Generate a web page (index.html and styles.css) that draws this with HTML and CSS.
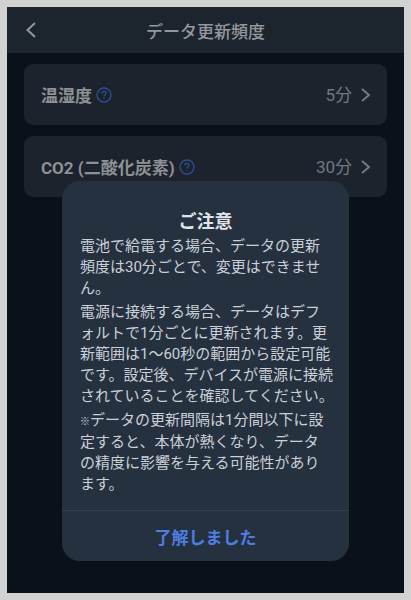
FILE: index.html
```html
<!DOCTYPE html>
<html lang="ja">
  <head>
    <meta charset="UTF-8" />
    <meta name="viewport" content="width=device-width, initial-scale=1.0" />
    <title>データ更新頻度</title>
    <link rel="stylesheet" href="styles.css">
  </head>

  <body>
    <div class="screen">
      <header class="header">
        <button class="back" aria-label="戻る">
          <svg width="10" height="16" viewBox="0 0 10 16"><path d="M9 1L1.5 8L9 15" /></svg>
        </button>
        <h1>データ更新頻度</h1>
      </header>

      <main class="list">
        <div class="item">
          <span class="name">温湿度</span>
          <button class="help" aria-label="温湿度のヘルプ">
            <svg width="16" height="16" viewBox="0 0 16 16">
              <circle cx="8" cy="8" r="7" />
              <path d="M6 6.5C6 3.7 10 3.7 10 6.3C10 7.8 8 7.8 8 9.5M8 11V12" />
            </svg>
          </button>
          <a class="value" href="#">5分
            <svg width="9" height="14" viewBox="0 0 9 14"><path d="M1 1L8 7L1 13" /></svg>
          </a>
        </div>
        <div class="item">
          <span class="name">CO2 (二酸化炭素)</span>
          <button class="help" aria-label="CO2のヘルプ">
            <svg width="16" height="16" viewBox="0 0 16 16">
              <circle cx="8" cy="8" r="7" />
              <path d="M6 6.5C6 3.7 10 3.7 10 6.3C10 7.8 8 7.8 8 9.5M8 11V12" />
            </svg>
          </button>
          <a class="value" href="#">30分
            <svg width="9" height="14" viewBox="0 0 9 14"><path d="M1 1L8 7L1 13" /></svg>
          </a>
        </div>
      </main>

      <div class="overlay">
        <div class="dialog" role="dialog" aria-labelledby="dialog-title">
          <div class="dialog-body">
            <h2 id="dialog-title">ご注意</h2>
            <p>電池で給電する場合、データの更新<br>頻度は30分ごとで、変更はできませ<br>ん。</p>
            <p>電源に接続する場合、データはデフ<br>ォルトで1分ごとに更新されます。更<br>新範囲は1〜60秒の範囲から設定可能<br>です。設定後、デバイスが電源に接続<br>されていることを確認してください。</p>
            <p><span class="mark">※</span>データの更新間隔は1分間以下に設<br>定すると、本体が熱くなり、データ<br>の精度に影響を与える可能性があり<br>ます。</p>
          </div>
          <button class="ok">了解しました</button>
        </div>
      </div>
    </div>
  </body>
</html>
```

FILE: styles.css
```css
* {
  box-sizing: border-box;
}

body {
  margin: 0;
  padding: 7px;
  min-height: 100vh;
  display: flex;
  background: #d2d2d2;
  font-family: Roboto, "Noto Sans CJK JP", sans-serif;
}

h1,
h2,
p {
  margin: 0;
}

button {
  padding: 0;
  border: 0;
  background: none;
  font-family: inherit;
  cursor: pointer;
}

svg {
  display: block;
  fill: none;
  stroke: currentColor;
}

.screen {
  position: relative;
  flex: 1;
  background: #0b1119;
}

.header {
  display: grid;
  grid-template-columns: 50px 1fr 50px;
  align-items: center;
  height: 46px;
  background: #1c242e;
  color: #94979b;
}

.header h1 {
  padding-top: 3px;
  font-size: 17px;
  font-weight: 500;
  line-height: 24px;
  text-align: center;
}

.back {
  display: flex;
  height: 46px;
  padding-left: 19px;
  align-items: center;
  color: #94979b;
}

.back svg,
.value svg {
  stroke-width: 2;
}

.list {
  display: grid;
  gap: 11px;
  padding: 11px 17px;
}

.item {
  display: flex;
  align-items: center;
  height: 61px;
  padding: 0 17px;
  border-radius: 9px;
  background: #1c232d;
}

.name {
  padding-top: 3px;
  color: #8e9195;
  font-size: 17px;
  font-weight: 700;
  line-height: 24px;
}

.help {
  margin-left: 4px;
  color: #2b4f98;
}

.help svg {
  stroke-width: 1.3;
}

.value {
  display: flex;
  align-items: center;
  gap: 9px;
  margin-left: auto;
  padding-top: 1px;
  color: #74787f;
  font-size: 17px;
  line-height: 24px;
  text-decoration: none;
}

/* окно поверх списка */
.overlay {
  position: absolute;
  inset: 0;
  display: flex;
  align-items: flex-end;
  padding: 0 55px 32px;
}

.dialog {
  flex: 1;
  border-radius: 18px;
  background: #263140;
  overflow: hidden;
}

.dialog-body {
  display: grid;
  gap: 3px;
  padding: 29px 0 15px 18px;
  color: #cbd0d7;
  font-size: 15px;
  line-height: 21px;
  white-space: nowrap;
}

.dialog h2 {
  padding-right: 18px;
  color: #e0e4ea;
  font-size: 18px;
  font-weight: 700;
  line-height: 23px;
  text-align: center;
}

.mark {
  font-size: 10px;
  font-weight: 700;
}

.ok {
  width: 100%;
  height: 51px;
  border-top: 1px solid #343f4e;
  color: #4f7de0;
  font-size: 17px;
  font-weight: 700;
}
```
